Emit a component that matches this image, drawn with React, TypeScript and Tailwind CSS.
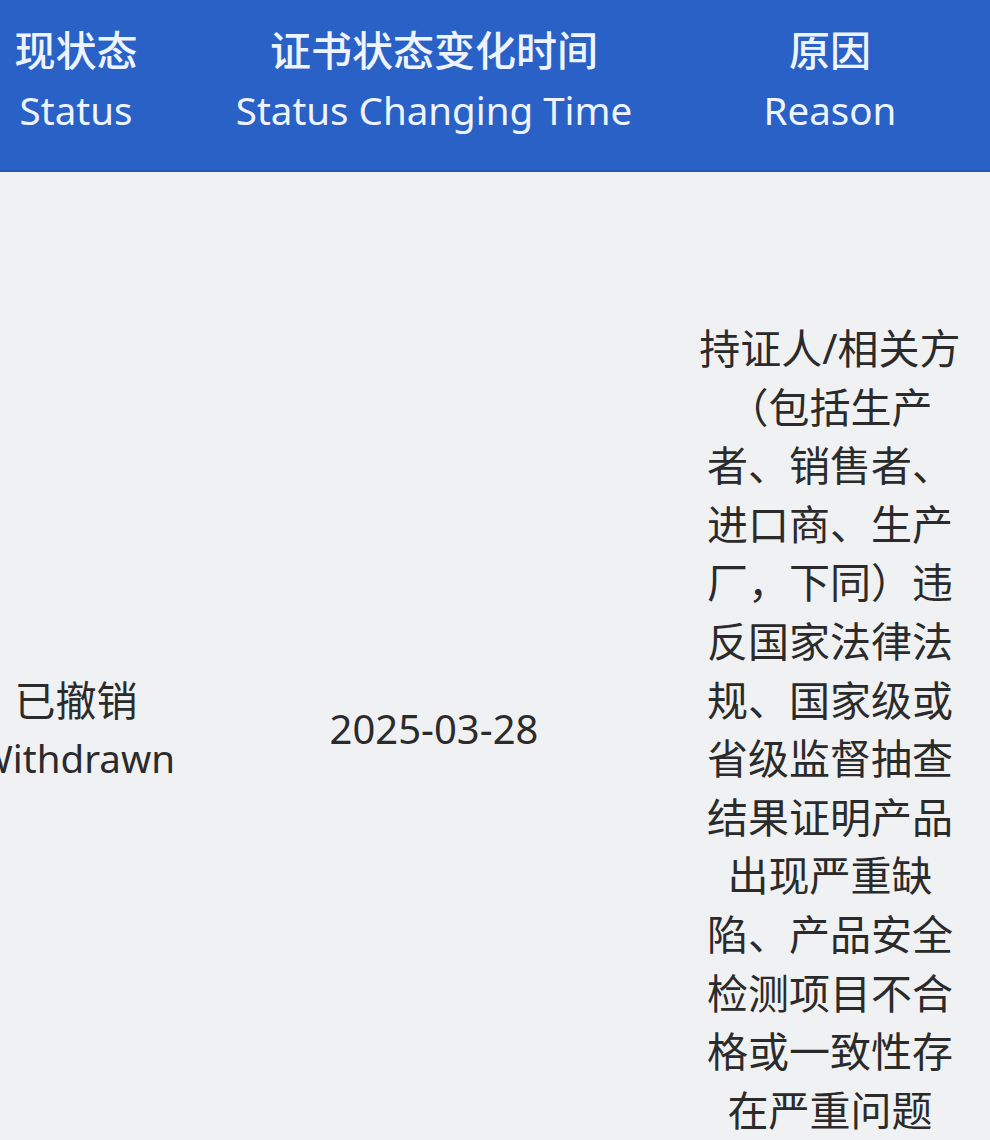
import React from "react";

const font = {
  fontFamily: '"Noto Sans", "Noto Sans CJK SC", sans-serif',
};

const reason =
  "持证人/相关方（包括生产者、销售者、进口商、生产厂，下同）违反国家法律法规、国家级或省级监督抽查结果证明产品出现严重缺陷、产品安全检测项目不合格或一致性存在严重问题";

function HeadCell({ zh, en }: { zh: string; en: string }) {
  return (
    <div className="flex flex-col items-center whitespace-nowrap leading-[60px]">
      <span className="font-medium">{zh}</span>
      <span className="text-[38.5px]">{en}</span>
    </div>
  );
}

export default function App() {
  return (
    <div
      className="w-[990px] h-[1140px] overflow-hidden bg-[#f0f1f3] text-[41px] text-[#2b2b2b]"
      style={font}
    >
      {/* header */}
      <div className="h-[172px] pt-[20px] bg-[#2961c7] text-[#eef4ff] border-b-2 border-[#2456b4] grid grid-cols-[152px_528px_300px]">
        <HeadCell zh="现状态" en="Status" />
        <div className="pl-[36px]">
          <HeadCell zh="证书状态变化时间" en="Status Changing Time" />
        </div>
        <HeadCell zh="原因" en="Reason" />
      </div>

      {/* row — taller than the viewport, cells centred vertically */}
      <div className="grid grid-cols-[152px_528px_300px] items-center leading-[58.6px]">
        <div className="flex flex-col items-center whitespace-nowrap">
          <span>已撤销</span>
          <span className="text-[38.5px]">Withdrawn</span>
        </div>
        <div className="pl-[36px] flex justify-center">
          <span className="text-[40px]">2025-03-28</span>
        </div>
        <div className="py-[147px] px-[16px] text-center">{reason}</div>
      </div>
    </div>
  );
}
